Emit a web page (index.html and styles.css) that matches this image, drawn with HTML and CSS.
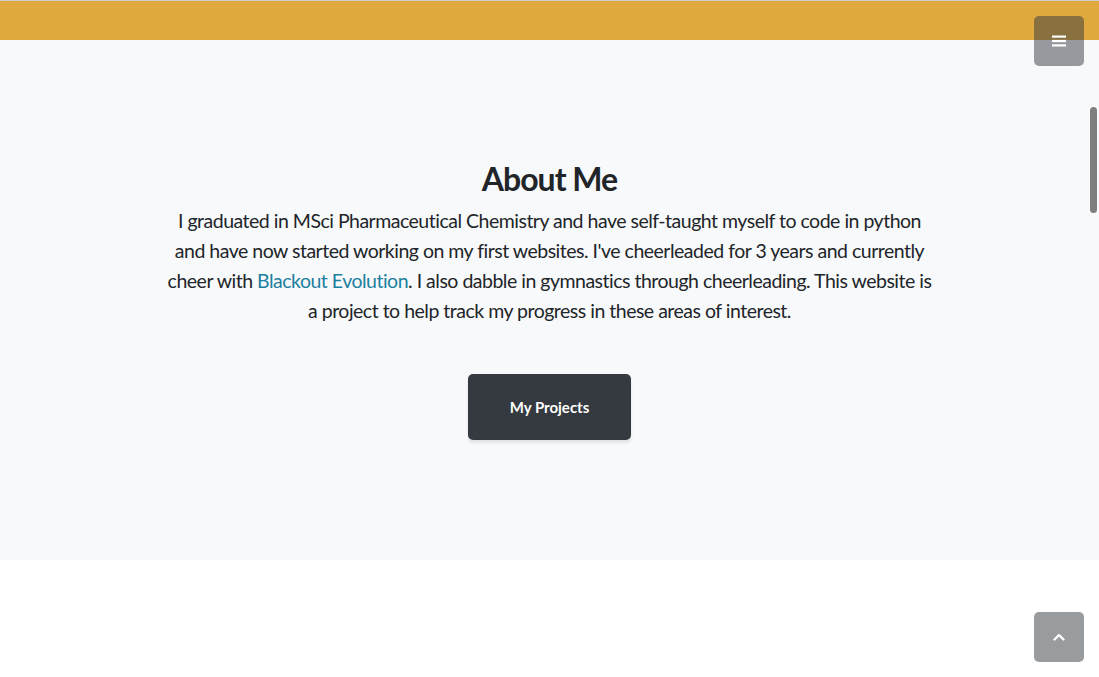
FILE: index.html
```html
<!DOCTYPE html>
<html lang="en">
<head>
<meta charset="utf-8">
<title>About Me</title>
<link rel="stylesheet" href="styles.css">
</head>
<body>
<header class="masthead"></header>
<a class="menu-toggle" href="#">
  <svg width="14" height="12" viewBox="0 0 14 12"><rect x="0" y="0.5" width="14" height="2.2" fill="#fff"/><rect x="0" y="4.9" width="14" height="2.2" fill="#fff"/><rect x="0" y="9.3" width="14" height="2.2" fill="#fff"/></svg>
</a>
<section class="content-section">
  <div class="inner">
    <h2 class="title">About Me</h2>
    <p class="lead">I graduated in MSci Pharmaceutical Chemistry and have self-taught myself to code in python<br>and have now started working on my first websites. I've cheerleaded for 3 years and currently<br>cheer with <a href="#" class="link">Blackout Evolution</a>. I also dabble in gymnastics through cheerleading. This website is<br>a project to help track my progress in these areas of interest.</p>
    <a href="#" class="btn">My Projects</a>
  </div>
</section>
<section class="blank"></section>
<a class="scroll-to-top" href="#">
  <svg width="12" height="8" viewBox="0 0 12 8"><polyline points="1.5,6.5 6,2 10.5,6.5" fill="none" stroke="#fff" stroke-width="2.4" stroke-linecap="round" stroke-linejoin="round"/></svg>
</a>
<div class="scroll-thumb"></div>
</body>
</html>
```
FILE: styles.css
```css
html, body { margin: 0; padding: 0; }
body {
  font-family: "Lato", "Open Sans", sans-serif;
  color: #212529;
  background: #fff;
  height: 677px;
  overflow: hidden;
}
.masthead {
  height: 39px;
  border-top: 1px solid #cccccc;
  background: #dfa93e;
}
.content-section {
  background: #f8f9fa;
  padding: 120px 0;
}
.inner {
  width: 820px;
  margin: 0 auto;
  text-align: center;
}
.title {
  margin: 0 0 8px;
  font-size: 32px;
  line-height: 38px;
  font-weight: 700;
  letter-spacing: -1px;
}
.lead {
  margin: 0 0 48px;
  font-size: 19.5px;
  line-height: 30px;
  font-weight: 400;
  letter-spacing: -0.5px;
  white-space: nowrap;
}
.link { color: #1d809f; text-decoration: none; }
.btn {
  display: inline-block;
  width: 163px;
  height: 66px;
  box-sizing: border-box;
  line-height: 66px;
  background: #343a40;
  color: #fff;
  font-weight: 700;
  font-size: 15px;
  letter-spacing: 0;
  text-decoration: none;
  border-radius: 5px;
  box-shadow: 0 3px 3px 0 rgba(33,37,41,0.1);
}
.menu-toggle, .scroll-to-top {
  position: fixed;
  right: 15px;
  width: 50px;
  height: 50px;
  border-radius: 5px;
  background: rgba(52,58,64,0.5);
  display: flex;
  align-items: center;
  justify-content: center;
}
.menu-toggle { top: 16px; }
.scroll-to-top { bottom: 15px; }
.scroll-thumb {
  position: fixed;
  right: 2px;
  top: 107px;
  width: 7px;
  height: 106px;
  border-radius: 4px;
  background: #7f7f7f;
}
```
